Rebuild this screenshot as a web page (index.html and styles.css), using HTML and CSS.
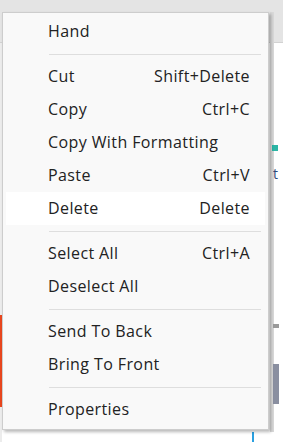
FILE: index.html
```html
<!DOCTYPE html>
<html lang="en">
<head>
    <meta charset="UTF-8">
    <title>Context Menu</title>
    <link rel="stylesheet" href="styles.css">
</head>
<body>
    <div class="desktop">
        <!-- app behind the menu -->
        <div class="toolbar"></div>
        <div class="left-edge"></div>
        <div class="accent-bar"></div>
        <div class="right-strip">
            <span class="teal-mark"></span>
            <span class="glyph">t</span>
            <span class="gray-mark"></span>
            <span class="slate-mark"></span>
        </div>
        <div class="blue-line"></div>

        <!-- context menu -->
        <ul class="menu">
            <li class="item"><span>Hand</span></li>
            <li class="sep"></li>
            <li class="item"><span>Cut</span><span class="key">Shift+Delete</span></li>
            <li class="item"><span>Copy</span><span class="key">Ctrl+C</span></li>
            <li class="item"><span>Copy With Formatting</span></li>
            <li class="item"><span>Paste</span><span class="key">Ctrl+V</span></li>
            <li class="item hover"><span>Delete</span><span class="key">Delete</span></li>
            <li class="sep"></li>
            <li class="item"><span>Select All</span><span class="key">Ctrl+A</span></li>
            <li class="item"><span>Deselect All</span></li>
            <li class="sep"></li>
            <li class="item"><span>Send To Back</span></li>
            <li class="item"><span>Bring To Front</span></li>
            <li class="sep"></li>
            <li class="item"><span>Properties</span></li>
        </ul>
    </div>
</body>
</html>
```

FILE: styles.css
```css
* {
    margin: 0;
    padding: 0;
    box-sizing: border-box;
}

body {
    background: #ffffff;
    font-family: 'Open Sans', 'Noto Sans', sans-serif;
}

.desktop {
    position: relative;
    width: 283px;
    height: 442px;
    overflow: hidden;
}

/* 背景應用 */
.toolbar {
    height: 43px;
    background: #e4e4e4;
    border-bottom: 1px solid #d2d2d2;
}

.left-edge {
    position: absolute;
    left: 0;
    top: 43px;
    width: 2px;
    height: 399px;
    background: #ececec;
}

.accent-bar {
    position: absolute;
    left: 0;
    top: 315px;
    width: 2px;
    height: 92px;
    background: #e8461e;
}

.right-strip {
    position: absolute;
    left: 270px;
    top: 12px;
    width: 4px;
    height: 420px;
    background: #d9d9d9;
}

.teal-mark {
    position: absolute;
    left: 2px;
    top: 133px;
    width: 6px;
    height: 6px;
    background: #2bb5a5;
}

.glyph {
    position: absolute;
    left: 3px;
    top: 152px;
    font-size: 14px;
    color: #2d4a7a;
}

.gray-mark {
    position: absolute;
    left: 3px;
    top: 312px;
    width: 6px;
    height: 4px;
    background: #9a9a9a;
}

.slate-mark {
    position: absolute;
    left: 3px;
    top: 352px;
    width: 6px;
    height: 40px;
    background: #8a8fa0;
}

.blue-line {
    position: absolute;
    left: 252px;
    top: 432px;
    width: 2px;
    height: 10px;
    background: #2aa0e0;
}

/* 右鍵選單 */
.menu {
    position: absolute;
    left: 2px;
    top: 12px;
    width: 267px;
    list-style: none;
    padding: 2px 3px 3px;
    background: #f9f9f9;
    border: 1px solid #cdcdcd;
    box-shadow: 2px 2px 3px rgba(0, 0, 0, 0.28);
}

.item {
    display: flex;
    justify-content: space-between;
    align-items: center;
    height: 33px;
    padding: 0 15px 1px 42px;
    font-size: 16px;
    letter-spacing: 0.4px;
    color: #222222;
}

.item.hover {
    background: #ffffff;
}

.sep {
    height: 12px;
    margin: 0 4px 0 43px;
    display: flex;
    align-items: center;
}

.sep::before {
    content: "";
    flex: 1;
    height: 1px;
    background: #dedede;
}
```
